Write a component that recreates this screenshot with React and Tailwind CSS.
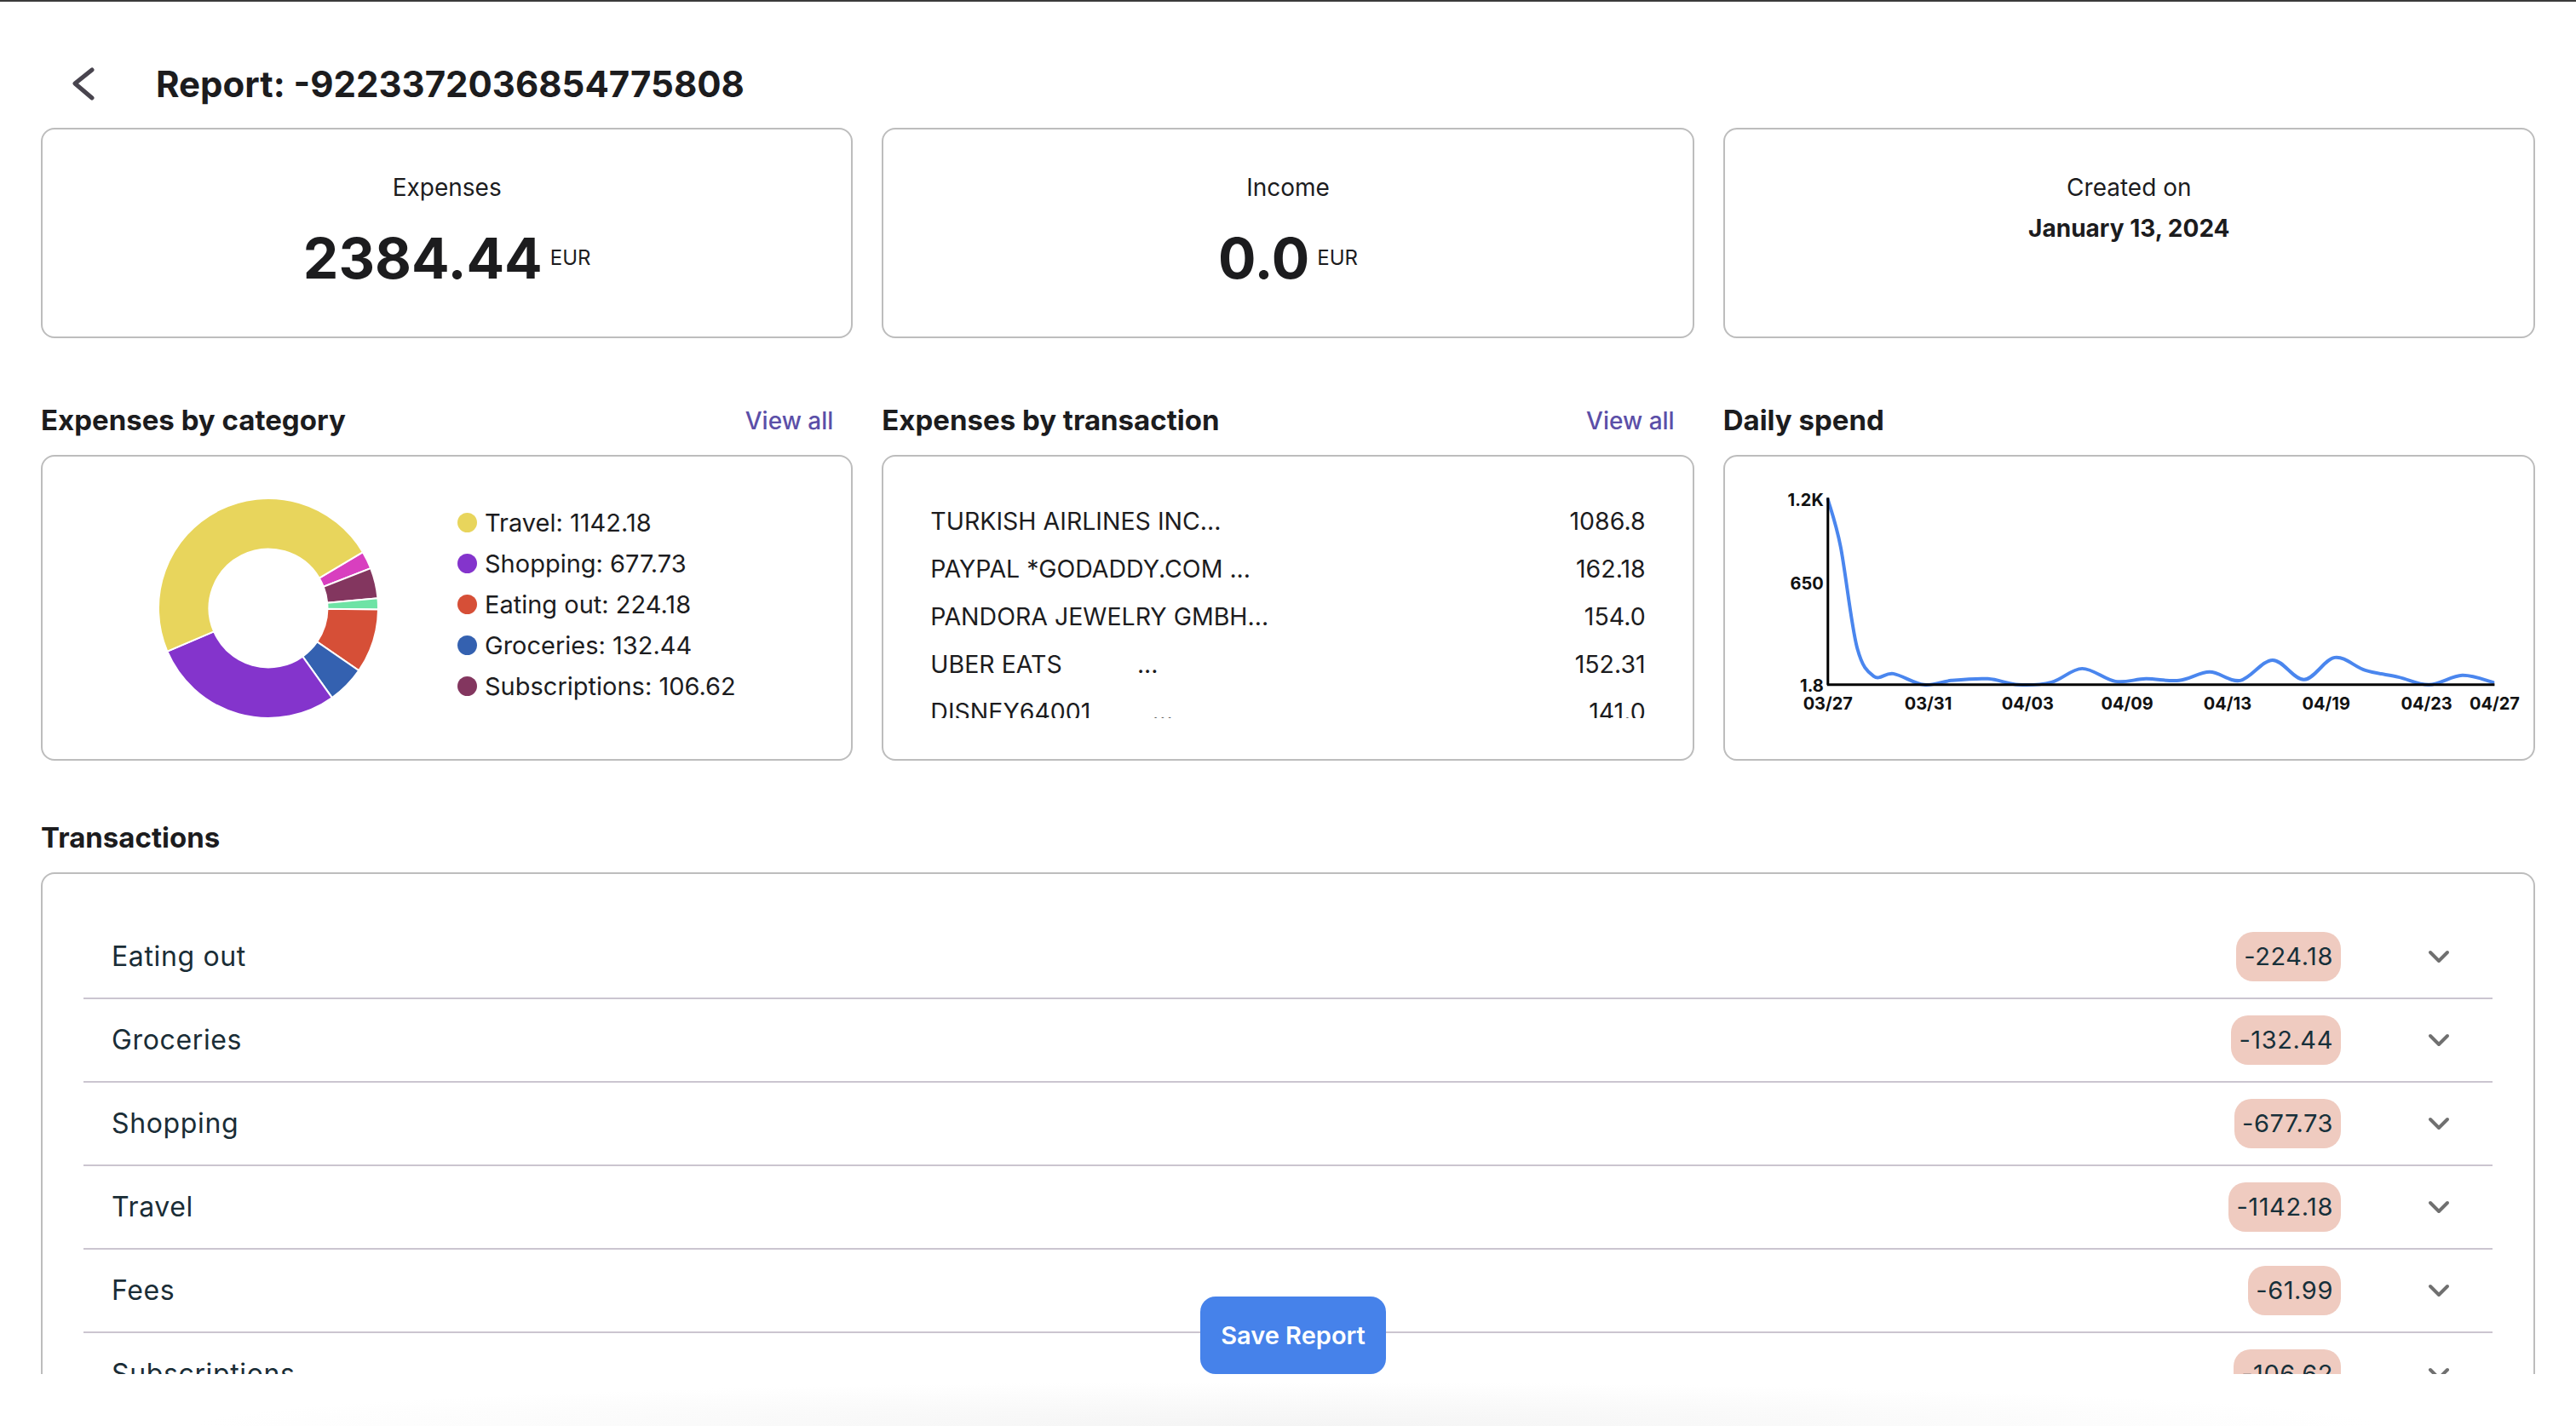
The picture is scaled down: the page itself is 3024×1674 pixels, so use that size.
import React from 'react'

const font = { fontFamily: 'Inter, "Noto Sans", sans-serif' }

const slices = [
  { v: 61.99, c: '#d83fbf' },
  { v: 106.62, c: '#83365f' },
  { v: 39.3, c: '#6ee3a5' },
  { v: 224.18, c: '#d64f37' },
  { v: 132.44, c: '#3461b0' },
  { v: 677.73, c: '#8434cc' },
  { v: 1142.18, c: '#e8d55c' }
]

const legend = [
  { label: 'Travel: 1142.18', c: '#e8d55c' },
  { label: 'Shopping: 677.73', c: '#8434cc' },
  { label: 'Eating out: 224.18', c: '#d64f37' },
  { label: 'Groceries: 132.44', c: '#3461b0' },
  { label: 'Subscriptions: 106.62', c: '#83365f' }
]

const topTx = [
  { name: 'TURKISH AIRLINES INC...', amount: '1086.8' },
  { name: 'PAYPAL *GODADDY.COM ...', amount: '162.18' },
  { name: 'PANDORA JEWELRY GMBH...', amount: '154.0' },
  { name: 'UBER EATS           ...', amount: '152.31' },
  { name: 'DISNEY64001         ...', amount: '141.0' }
]

const categories = [
  { name: 'Eating out', amount: '-224.18' },
  { name: 'Groceries', amount: '-132.44' },
  { name: 'Shopping', amount: '-677.73' },
  { name: 'Travel', amount: '-1142.18' },
  { name: 'Fees', amount: '-61.99' },
  { name: 'Subscriptions', amount: '-106.62' },
  { name: 'Other', amount: '-39.30' }
]

const spend = [
  [121, 50], [136, 106], [155, 223], [175, 258], [198, 255], [234, 268], [266, 263],
  [309, 261], [345, 268], [384, 265], [420, 249], [459, 264], [495, 261], [534, 263],
  [570, 253], [606, 263], [644, 239], [681, 262], [717, 236], [753, 251], [792, 259],
  [828, 268], [867, 257], [903, 265]
]

const xTicks = [
  ['03/27', 121], ['03/31', 239], ['04/03', 356], ['04/09', 473],
  ['04/13', 591], ['04/19', 707], ['04/23', 825], ['04/27', 905]
]

function arc(a0, a1, R, r) {
  const p = (a, rad) => [rad * Math.sin((a * Math.PI) / 180), -rad * Math.cos((a * Math.PI) / 180)]
  const large = a1 - a0 > 180 ? 1 : 0
  const [x0, y0] = p(a0, R)
  const [x1, y1] = p(a1, R)
  const [x2, y2] = p(a1, r)
  const [x3, y3] = p(a0, r)
  return `M${x0} ${y0} A${R} ${R} 0 ${large} 1 ${x1} ${y1} L${x2} ${y2} A${r} ${r} 0 ${large} 0 ${x3} ${y3}Z`
}

function smooth(pts) {
  let d = `M${pts[0][0]} ${pts[0][1]}`
  for (let i = 0; i < pts.length - 1; i++) {
    const p0 = pts[i - 1] || pts[i]
    const p1 = pts[i]
    const p2 = pts[i + 1]
    const p3 = pts[i + 2] || p2
    const c1 = [p1[0] + (p2[0] - p0[0]) / 6, p1[1] + (p2[1] - p0[1]) / 6]
    const c2 = [p2[0] - (p3[0] - p1[0]) / 6, p2[1] - (p3[1] - p1[1]) / 6]
    d += ` C${c1[0]} ${c1[1]} ${c2[0]} ${c2[1]} ${p2[0]} ${p2[1]}`
  }
  return d
}

function Donut() {
  const total = slices.reduce((s, x) => s + x.v, 0)
  let a = 59.3
  return (
    <svg width="260" height="260" viewBox="-131 -131 262 262">
      {slices.map((s, i) => {
        const a0 = a
        const a1 = a + (s.v / total) * 360
        a = a1
        return <path key={i} d={arc(a0, a1, 130, 70)} fill={s.c} stroke="#fff" strokeWidth="2" />
      })}
    </svg>
  )
}

function DailyChart() {
  return (
    <svg className="block h-full w-full" viewBox="0 0 951 355">
      <path d={smooth(spend)} fill="none" stroke="#4a86ee" strokeWidth="4" strokeLinecap="round" />
      <line x1="121" y1="48" x2="121" y2="268" stroke="#000" strokeWidth="3" />
      <line x1="120" y1="268" x2="905" y2="268" stroke="#000" strokeWidth="3" />
      <g fontFamily="Inter, sans-serif" fontWeight="700" fontSize="20" fill="#111">
        <text x="116" y="58" textAnchor="end">1.2K</text>
        <text x="116" y="156" textAnchor="end">650</text>
        <text x="116" y="276" textAnchor="end">1.8</text>
        {xTicks.map(([t, x]) => (
          <text key={t} x={x} y="297" textAnchor="middle">{t}</text>
        ))}
      </g>
    </svg>
  )
}

function StatCard({ children }) {
  return (
    <div className="flex h-[247px] flex-col items-center rounded-[16px] border-2 border-[#bdbdbd] pt-[50px]">
      {children}
    </div>
  )
}

function Amount({ value }) {
  return (
    <div className="mt-[29px] flex items-center gap-[9px]">
      <span className="text-[66px] font-bold leading-[72px] text-[#1c1c1e]">{value}</span>
      <span className="text-[24px] leading-[28px] text-[#1c1c1e]">EUR</span>
    </div>
  )
}

function SectionHead({ title, link }) {
  return (
    <div className="mb-[20px] flex h-[40px] items-center justify-between pr-[23px]">
      <h2 className="text-[33px] font-bold text-[#1c1c1e]">{title}</h2>
      {link && <span className="text-[28px] font-medium text-[#5b4fa8]">View all</span>}
    </div>
  )
}

export default function App() {
  return (
    <div
      className="relative flex h-[1674px] w-[3024px] flex-col overflow-hidden border-t-2 border-[#3a3a3a] bg-white"
      style={font}
    >
      <div className="h-[1611px] shrink-0 overflow-hidden px-[48px]">
        {/* Header */}
        <div className="mt-[66px] flex h-[60px] items-center pl-[36px]">
          <svg width="30" height="40" viewBox="0 0 30 40">
            <polyline points="24,4 4,20 24,37" fill="none" stroke="#48444e" strokeWidth="5" strokeLinecap="round" strokeLinejoin="round" />
          </svg>
          <h1 className="ml-[69px] text-[42px] font-bold text-[#1c1c1e]">Report: -9223372036854775808</h1>
        </div>

        {/* Summary cards */}
        <div className="mt-[22px] grid grid-cols-3 gap-[34px]">
          <StatCard>
            <div className="text-[28px] leading-[36px] text-[#1c1c1e]">Expenses</div>
            <Amount value="2384.44" />
          </StatCard>
          <StatCard>
            <div className="text-[28px] leading-[36px] text-[#1c1c1e]">Income</div>
            <Amount value="0.0" />
          </StatCard>
          <StatCard>
            <div className="text-[28px] leading-[36px] text-[#1c1c1e]">Created on</div>
            <div className="mt-[12px] text-[28px] font-bold leading-[36px] text-[#1c1c1e]">January 13, 2024</div>
          </StatCard>
        </div>

        {/* Charts */}
        <div className="mt-[77px] grid grid-cols-3 gap-[34px]">
          <div className="flex flex-col">
            <SectionHead title="Expenses by category" link />
            <div className="flex h-[359px] items-center rounded-[16px] border-2 border-[#bdbdbd] pl-[135px]">
              <Donut />
              <div className="mb-[8px] ml-[92px] flex flex-col gap-[12px]">
                {legend.map((l) => (
                  <div key={l.label} className="flex items-center gap-[9px] text-[29px] leading-[36px] text-[#1c1c1e]">
                    <span className="h-[23px] w-[23px] rounded-full" style={{ backgroundColor: l.c }} />
                    {l.label}
                  </div>
                ))}
              </div>
            </div>
          </div>

          <div className="flex flex-col">
            <SectionHead title="Expenses by transaction" link />
            <div className="h-[359px] rounded-[16px] border-2 border-[#bdbdbd] px-[55px] pt-[48px]">
              <div className="h-[259px] overflow-hidden">
                {topTx.map((t) => (
                  <div key={t.name} className="flex h-[56px] items-center justify-between text-[28.5px] text-[#1c1c1e]">
                    <span className="whitespace-pre">{t.name}</span>
                    <span>{t.amount}</span>
                  </div>
                ))}
              </div>
            </div>
          </div>

          <div className="flex flex-col">
            <SectionHead title="Daily spend" />
            <div className="h-[359px] rounded-[16px] border-2 border-[#bdbdbd]">
              <DailyChart />
            </div>
          </div>
        </div>

        {/* Transactions */}
        <div className="mt-[71px] flex h-[40px] items-center">
          <h2 className="text-[33px] font-bold text-[#1c1c1e]">Transactions</h2>
        </div>
        <div className="mt-[20px] rounded-[16px] border-2 border-[#bdbdbd] px-[48px] pt-[49px]">
          {categories.map((c) => (
            <div key={c.name} className="flex h-[98px] items-center border-b-2 border-[#cbc5d0] pl-[33px] pr-[50px]">
              <span className="flex-1 text-[32px] tracking-[0.02em] text-[#1a2d36]">{c.name}</span>
              <span className="flex h-[58px] items-center rounded-[20px] bg-[#efcbc0] px-[9px] text-[29px] tracking-[0.02em] text-[#17303a]">
                {c.amount}
              </span>
              <svg className="ml-[102px]" width="26" height="16" viewBox="0 0 26 16">
                <polyline points="3,3 13,13 23,3" fill="none" stroke="#707070" strokeWidth="4" strokeLinecap="round" strokeLinejoin="round" />
              </svg>
            </div>
          ))}
        </div>
      </div>

      <div className="flex-1 bg-[radial-gradient(ellipse_at_bottom,#f4f4f4,#ffffff_60%)]" />

      <button className="absolute left-[1409px] top-[1520px] h-[91px] w-[218px] rounded-[18px] bg-[#4682ea] text-[29px] font-semibold text-white">
        Save Report
      </button>
    </div>
  )
}
